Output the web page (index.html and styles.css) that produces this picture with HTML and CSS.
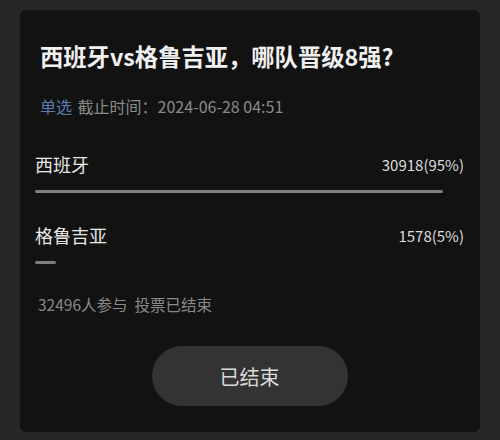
FILE: index.html
```html
<!DOCTYPE html>
<html lang="zh-CN">
<head>
  <meta charset="UTF-8">
  <meta name="viewport" content="width=device-width, initial-scale=1.0">
  <title>投票</title>
  <link rel="stylesheet" href="styles.css">
</head>
<body>
  <div class="vote-card">
    <h1 class="vote-title">西班牙vs格鲁吉亚，哪队晋级8强?</h1>
    <div class="vote-meta">
      <span class="vote-type">单选</span>
      <span>截止时间：2024-06-28 04:51</span>
    </div>

    <div class="option">
      <div class="option-row">
        <span class="option-name">西班牙</span>
        <span class="option-count">30918(95%)</span>
      </div>
      <div class="option-bar" style="width: 95%"></div>
    </div>

    <div class="option">
      <div class="option-row">
        <span class="option-name">格鲁吉亚</span>
        <span class="option-count">1578(5%)</span>
      </div>
      <div class="option-bar" style="width: 5%"></div>
    </div>

    <div class="vote-summary">32496人参与&nbsp;&nbsp;投票已结束</div>

    <div class="vote-actions">
      <button class="vote-btn" disabled>已结束</button>
    </div>
  </div>
</body>
</html>
```

FILE: styles.css
```css
body {
  margin: 0;
  padding: 10px 20px 7px;
  background: #272727;
  font-family: "Noto Sans CJK SC", "Noto Sans", sans-serif;
}
.vote-card {
  background: #121212;
  border-radius: 6px;
  padding: 30px 16px 26px 15px;
}
.vote-title {
  margin: 0;
  padding-left: 5px;
  font-size: 23.3px;
  line-height: 32px;
  font-weight: bold;
  color: #f0f0f0;
}
.vote-meta {
  margin-top: 24px;
  padding-left: 5px;
  font-size: 16px;
  line-height: 20px;
  color: #8a8a8a;
}
.vote-type {
  color: #5a7db3;
  margin-right: 2px;
}
.option {
  margin-top: 36px;
}
.option + .option {
  margin-top: 30px;
}
.option-row {
  display: flex;
  justify-content: space-between;
  align-items: center;
  height: 24px;
}
.option-name {
  font-size: 18px;
  color: #e8e8e8;
}
.option-count {
  font-size: 15px;
  color: #dcdcdc;
}
.option-bar {
  height: 3px;
  margin-top: 14px;
  background: #7d7d7d;
  border-radius: 2px;
}
.vote-summary {
  margin-top: 30px;
  padding-left: 3px;
  font-size: 15.5px;
  line-height: 20px;
  color: #8a8a8a;
}
.vote-actions {
  display: flex;
  justify-content: center;
  margin-top: 32px;
}
.vote-btn {
  width: 196px;
  height: 60px;
  border: none;
  border-radius: 30px;
  background: #333333;
  color: #dadada;
  font-family: inherit;
  font-size: 20px;
}
```
